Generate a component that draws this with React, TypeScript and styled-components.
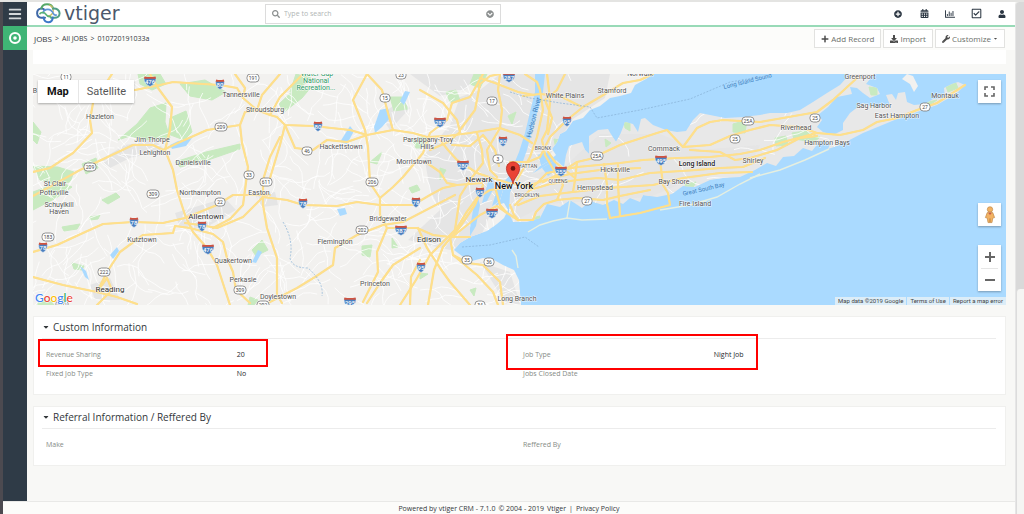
import React from "react";
import styled, { createGlobalStyle, css } from "styled-components";
import {
  FaBars,
  FaCalendarAlt,
  FaCaretDown,
  FaChevronCircleDown,
  FaDownload,
  FaPlus,
  FaPlusCircle,
  FaRegChartBar,
  FaRegCheckSquare,
  FaSearch,
  FaUser,
  FaWrench,
} from "react-icons/fa";

const GlobalStyle = createGlobalStyle`
  *, *::before, *::after { box-sizing: border-box; }
  body { margin: 0; background: #f8f8f6; }
  body, button, input { font-family: "Open Sans", "Noto Sans", sans-serif; }
  h2, dl, dt, dd, p { margin: 0; font-weight: 400; }
  button { padding: 0; border: 0; background: none; color: inherit; }
  a { color: inherit; text-decoration: none; }
`;

/* ---------- page frame ---------- */

const Frame = styled.div`
  display: grid;
  grid-template-columns: 3px minmax(0, 1fr) 9px;
  min-height: 100vh;
  border-top: 2px solid #e4e4e2;
`;

const WindowEdge = styled.div`
  background: #4c4a50;
`;

const ScrollTrack = styled.div`
  display: flex;
  flex-direction: column;
  justify-content: flex-end;
  background: #d9d9d9;
  border-left: 1px solid #e6e6e6;
  border-radius: 4px 0 0 0;
`;

const ScrollThumb = styled.div`
  height: 44%;
  background: #f5f5f3;
  border-left: 1px solid #dcdcdc;
  border-radius: 4px 0 0 0;
`;

const AppShell = styled.div`
  display: flex;
  flex-direction: column;
`;

const Workspace = styled.div`
  display: grid;
  grid-template-columns: 24px minmax(0, 1fr);
  flex: 1;
`;

const SideNav = styled.nav`
  display: flex;
  flex-direction: column;
  background: #2f3b47;
`;

const SideButton = styled.button<{ $active?: boolean }>`
  display: flex;
  align-items: center;
  justify-content: center;
  height: 24px;
  color: ${(p) => (p.$active ? "#ffffff" : "#d3d7da")};
  background: ${(p) => (p.$active ? "#3fb475" : "transparent")};
`;

const MainColumn = styled.div`
  display: flex;
  flex-direction: column;
`;

/* ---------- header ---------- */

const Header = styled.header`
  display: flex;
  align-items: center;
  height: 25px;
  background: #ffffff;
  border-bottom: 2px solid #98dab7;
`;

const Brand = styled.a`
  display: flex;
  align-items: center;
  gap: 3px;
  flex: 0 0 238px;
  height: 23px;
  padding-left: 8px;
`;

const BrandName = styled.span`
  font: 19px/20px "DejaVu Sans", sans-serif;
  color: #4b586b;
  padding-bottom: 2px;
`;

const SearchBox = styled.label`
  display: flex;
  align-items: center;
  gap: 4px;
  flex: 0 1 236px;
  height: 20px;
  padding: 0 6px;
  border: 1px solid #dcdcdc;
  color: #8b8f8f;
`;

const SearchInput = styled.input`
  flex: 1;
  min-width: 0;
  padding: 0;
  border: 0;
  outline: 0;
  background: transparent;
  font-size: 7px;
  line-height: 12px;
  color: #444444;
  &::placeholder {
    color: #b0b5b5;
    opacity: 1;
  }
`;

const HeaderTools = styled.div`
  display: flex;
  align-items: center;
  margin-left: auto;
`;

const ToolButton = styled.button`
  display: flex;
  align-items: center;
  justify-content: center;
  width: 26px;
  height: 22px;
  color: #2b3642;
`;

/* ---------- breadcrumb bar ---------- */

const ModuleBar = styled.div`
  display: flex;
  align-items: center;
  justify-content: space-between;
  height: 23px;
  padding: 0 10px 0 7px;
  background: #fcfcfa;
`;

const Breadcrumb = styled.nav`
  display: flex;
  align-items: center;
  gap: 3px;
  font-size: 7px;
  line-height: 12px;
  color: #33373b;
`;

const ModuleName = styled.a`
  font-size: 8px;
`;

const ButtonRow = styled.div`
  display: flex;
  gap: 2px;
`;

const ActionButton = styled.button`
  display: flex;
  align-items: center;
  gap: 2px;
  height: 19px;
  padding: 0 6px;
  border: 1px solid #e2e2e0;
  background: #ffffff;
  font-size: 8px;
  line-height: 12px;
  color: #6b6f6b;
  svg { color: #4c4c4c; }
`;

/* ---------- content ---------- */

const Content = styled.main`
  display: flex;
  flex-direction: column;
  flex: 1;
  padding: 0 9px 10px 6px;
  background: #f8f8f6;
`;

const SummaryStrip = styled.div`
  height: 14px;
  background: #ffffff;
  margin-bottom: 10px;
`;

const MapPanel = styled.section`
  position: relative;
  height: 231px;
  margin-bottom: 11px;
  overflow: hidden;
  background: #aadaff;
  font-family: Roboto, sans-serif;
`;

const MapDrawing = styled.svg`
  display: block;
  width: 100%;
  height: 100%;
  font-family: Roboto, sans-serif;
`;

const mapControl = css`
  position: absolute;
  background: #ffffff;
  box-shadow: 0 1px 2px rgba(0, 0, 0, 0.3);
  color: #666666;
`;

const MapTypeSwitch = styled.div`
  ${mapControl}
  left: 5px;
  top: 6px;
  display: flex;
  height: 23px;
`;

const MapTypeButton = styled.button<{ $selected?: boolean }>`
  padding: 0 9px;
  font: ${(p) => (p.$selected ? 700 : 400)} 11px/23px Roboto, sans-serif;
  color: ${(p) => (p.$selected ? "#111111" : "#565656")};
  & + & { border-left: 1px solid #e6e6e6; padding: 0 8px; }
`;

const MapSquare = styled.button<{ $top: number }>`
  ${mapControl}
  right: 5px;
  top: ${(p) => p.$top}px;
  display: flex;
  align-items: center;
  justify-content: center;
  width: 23px;
  height: 23px;
`;

const ZoomControl = styled.div`
  ${mapControl}
  right: 5px;
  bottom: 14px;
  display: flex;
  flex-direction: column;
  align-items: center;
  width: 23px;
`;

const ZoomButton = styled.button`
  display: flex;
  align-items: center;
  justify-content: center;
  width: 17px;
  height: 23px;
  & + & { border-top: 1px solid #e6e6e6; }
`;

const MapCredits = styled.div`
  position: absolute;
  right: 0;
  bottom: 0;
  display: flex;
  gap: 1px;
  font-size: 6px;
  line-height: 8px;
  color: #444444;
  > * {
    padding: 0 3px;
    background: #dcedf8;
  }
`;

const Card = styled.section`
  background: #ffffff;
  border: 1px solid #f0f0ee;
  & + & { margin-top: 11px; }
`;

const CardTitle = styled.h2`
  display: flex;
  align-items: center;
  gap: 3px;
  height: 22px;
  margin: 0 9px 0 8px;
  padding-bottom: 2px;
  border-bottom: 1px solid #ececec;
  font-size: 10px;
  line-height: 16px;
  color: #33373a;
`;

const FieldGrid = styled.dl`
  display: grid;
  grid-template-columns: 1fr 1fr;
  padding: 6px 5px 11px 12px;
`;

const Field = styled.div`
  position: relative;
  display: grid;
  grid-template-columns: 2fr 3fr;
  font-size: 7px;
  line-height: 19px;
  dt { color: #868b86; }
  dd { color: #26292c; }
`;

const Highlight = styled.span<{ $wide?: boolean }>`
  position: absolute;
  pointer-events: none;
  border: 2px solid #ff0000;
  ${(p) =>
    p.$wide
      ? css`inset: -11px 242px -6px -17px;`
      : css`inset: -6px 255px -3px -8px;`}
`;

const Footer = styled.footer`
  height: 13px;
  border-top: 1px solid #e9e9e7;
  background: #fcfcfa;
  display: flex;
  justify-content: center;
  gap: 3px;
  font-size: 7px;
  line-height: 14px;
  color: #33373a;
`;

const MAINLAND =
  "33,74 653,74 646,79 635,85 631,93 620,96 610,98 600,106 590,110 583,118 573,121 566,131 560,134 557,142 552,149 556,155 549,161 540,166 530,176 520,184 511,187 503,190 500,200 494,206 504,203 508,210 504,218 497,224 487,231 470,237 460,243 454,250 462,256 472,261 483,258 494,260 503,265 514,270 519,280 521,305 33,305";
const LONG_ISLAND =
  "510,193 516,180 530,175 545,166 556,160 564,167 566,155 569,146 582,142 585,150 589,154 589,136 598,130 608,129 612,136 616,142 620,135 625,122 633,124 638,132 641,119 645,118 653,125 666,130 677,132 686,131 693,120 700,113 710,115 725,118 743,117 760,115 770,113 787,113 800,110 813,102 827,93 840,85 850,74 874,74 866,84 877,88 880,94 870,98 863,93 857,88 850,87 852,94 837,97 828,107 818,115 822,120 817,127 823,132 833,135 843,130 843,123 850,113 863,103 876,108 890,105 886,95 892,94 896,100 898,93 905,92 907,102 914,105 925,104 933,99 945,98 944,88 952,84 958,82 965,85 957,93 937,105 917,112 897,119 863,133 840,145 828,149 831,142 820,141 812,151 803,148 794,156 783,157 776,166 767,163 755,170 740,177 723,178 710,180 695,187 683,186 672,194 657,197 643,195 640,202 630,198 623,204 614,200 603,205 590,201 582,208 570,200 560,207 547,204 540,218 527,222 513,222 509,213";

const URBAN = [
  "500,74 610,74 605,98 573,119 552,152 530,176 494,206 480,238 450,250 428,245 408,240 440,210 430,190 424,155 450,125 460,97 480,90",
  "410,74 480,74 465,90 440,96",
  "510,193 530,175 564,167 600,134 660,134 700,150 760,145 750,165 690,180 650,197 547,204 513,222",
  "100,160 125,145 155,140 165,150 130,158 110,168",
  "175,213 225,198 236,210 205,228 180,228",
  "90,285 110,278 120,300 95,300",
  "255,195 275,192 278,205 262,207",
  "480,262 510,272 520,304 506,304",
  "380,115 402,100 410,108 390,130",
];

const WATER = [
  "535,74 545,74 543,92 537,113 532,130 527,150 519,172 509,188 501,200 492,206 497,190 509,176 519,152 525,133 530,112 535,92",
  "538,155 546,152 555,158 557,169 548,176 542,168",
  "470,228 474,204 478,198 480,205 476,226 470,236",
  "488,182 493,176 494,188 487,201 482,203",
  "170,145 178,141 192,138 186,146 172,149",
  "374,127 380,110 388,108 390,118 382,127 375,133",
  "110,255 117,247 119,251 113,259",
  "337,209 345,208 347,214 340,216",
  "80,266 86,271 89,280 85,277",
  "252,262 258,250 262,252 256,263",
  "340,142 350,126 354,131 347,144",
  "400,101 405,91 410,92 404,105",
];

const PARKS = [
  "138,74 160,74 166,84 152,90 140,84",
  "180,84 205,80 226,92 212,100 190,96",
  "118,140 137,124 150,108 166,103 165,122 170,138 146,140 130,136",
  "170,118 186,111 192,132 184,140 168,134",
  "33,122 41,132 37,144 33,140",
  "33,166 58,167 74,172 70,182 54,184 40,180",
  "82,164 96,158 98,168 86,174",
  "33,192 60,182 72,187 56,198 33,210",
  "102,200 116,193 120,197 108,204",
  "62,227 80,224 77,229 64,231",
  "90,217 100,215 98,219 90,220",
  "175,162 206,152 240,144 240,149 208,160 180,167",
  "279,104 296,88 312,86 302,98 284,112",
  "296,74 311,78 300,88 290,92",
  "390,97 402,97 408,109 394,111",
  "412,139 430,136 427,148 416,148",
  "470,84 474,74 487,74 480,88",
  "446,92 456,90 460,100 450,102",
  "252,250 262,240 268,250 256,256",
  "362,246 372,245 370,257 362,255",
  "409,188 417,185 420,190 412,193",
  "392,238 398,247 392,248",
  "440,168 446,170 440,180",
  "370,162 382,152 377,164",
  "733,124 747,120 745,133 733,132",
  "775,138 786,136 788,145 776,146",
  "792,133 805,131 820,137 814,142 794,139",
  "869,87 877,88 877,95 871,95",
  "685,184 696,182 692,189 686,189",
  "945,84 955,81 958,88 948,92",
  "924,103 937,100 928,106",
  "624,121 630,123 630,131 625,128",
  "554,139 560,140 556,149",
  "536,217 540,216 538,223 534,222",
  "605,139 611,143 606,147",
  "508,116 516,112 512,124",
  "38,302 50,300 54,305 38,305",
  "72,263 84,266 82,270 74,269",
  "420,273 428,274 420,279",
  "470,290 476,288 474,296",
  "250,297 258,300 254,305 248,305",
];

const HIGHWAYS = [
  "135,90 160,85 173,82 203,84 220,85 237,88 243,98 257,110 270,115 277,117 285,125 313,126 350,130 367,135 393,130 413,133 427,137 447,136 470,133 500,128 520,135 532,143",
  "112,74 93,103 90,120 92,133 73,153 50,168 33,172",
  "150,74 158,88 172,107 170,130 165,150 173,170 177,190 185,215 193,232 207,248 217,265 230,305",
  "33,196 53,185 80,170 97,162 133,145 153,145 163,150 180,142 207,130 240,125 245,112 257,110",
  "240,125 242,143 248,167 245,190 243,205 230,219 213,228",
  "280,137 270,157 263,180 263,205 267,228 277,258 277,295 282,303",
  "235,74 245,88 243,98",
  "280,74 262,95 257,110",
  "33,252 57,245 83,233 103,224 133,222 163,223 185,218 217,205 233,195 270,195",
  "185,223 200,225 217,228 243,217 263,197 287,200 303,205 337,206 357,202 380,205 413,205 430,195 443,188 457,185 482,183",
  "190,228 175,226 173,233 143,235 120,252 107,272 97,292",
  "33,277 63,285 97,292 117,297 137,304",
  "97,292 107,278 112,290 97,305",
  "190,228 213,234 223,242 227,258 233,272 236,290 250,303",
  "270,302 297,288 315,277 333,265 335,248 357,235 383,225 403,222 430,208 455,195",
  "483,74 470,97 452,103 447,120 430,133 423,153 403,177 393,187 380,198 380,215 387,228 417,228 433,235 450,237 470,237",
  "367,74 353,100 365,130 368,147 370,183 380,198",
  "387,228 377,252 378,272 363,302",
  "367,74 382,90 388,113 393,130",
  "285,125 295,148 313,150 327,140 347,142 367,135",
  "303,74 280,97 270,115",
  "270,178 280,145 285,125",
  "511,187 490,190 477,198 466,213 457,228 430,255 416,280 400,305",
  "483,185 475,205 459,228 443,247 434,270 428,305",
  "420,248 393,265 380,283 367,303",
  "410,305 411,277 420,260",
  "450,237 453,255 477,275 493,292 498,305",
  "418,228 427,248 440,268 450,282 470,305",
  "453,255 468,263 483,265 500,282 503,305",
  "420,90 443,103 457,120 460,132 448,142 430,150",
  "460,130 475,110 480,84 490,76 500,74",
  "500,74 498,90 502,110 500,128 487,150 490,170 497,177",
  "477,133 482,150 483,163 470,180 460,196 455,230",
  "440,140 448,150 457,160 477,173 492,178 512,184",
  "427,163 440,172 447,183 457,185",
  "452,145 470,146 483,135 495,150 499,166",
  "525,74 537,82 540,90 543,110 537,137 530,157 517,180",
  "547,74 549,90 550,103 547,130 542,140 545,155",
  "565,74 557,90 545,100 552,118 548,134",
  "523,96 540,94 560,96 580,106",
  "480,78 495,83 518,92 534,95",
  "653,74 640,80 623,83 600,97 583,107 567,120 550,137 540,157 528,162 510,162",
  "515,205 525,195 547,173 577,167 620,163 643,160 677,158 710,157 740,154 760,150 783,142 817,133 840,135 863,130 877,122 897,118 917,110 937,103 965,85",
  "543,182 557,175 577,162 590,159 620,145 657,133 667,130 683,147 697,128 710,122 723,120 760,122 783,118 817,112 833,100 857,78",
  "683,147 710,145 730,136 750,130 770,125 800,127 817,133",
  "690,150 720,152 735,160 750,158 777,150 800,138 817,136",
  "530,190 550,184 577,180 598,178 620,180 650,173 697,170 720,168 743,167 765,158",
  "518,205 540,196 573,192 607,188 653,185 683,178 720,173 752,172",
  "510,205 514,215 518,220 533,220 536,212 544,204 557,200 577,198 603,200 620,196 650,190",
  "604,164 607,185 607,204 610,218 640,213 670,205 668,193 663,185 660,160",
  "618,165 618,184 620,216",
  "545,155 555,172 563,185 557,200",
  "577,162 575,180 573,192",
  "512,183 528,186 545,180 570,174 600,170 640,168",
  "548,152 555,162 575,178",
  "452,237 480,215 497,206 507,213 518,220",
  "495,187 500,205 507,213",
];

const BEACHES = [
  "528,232 540,225 553,221 567,218 582,220 607,219",
  "567,218 570,200",
  "750,178 780,170 805,160 829,149",
  "660,210 690,205 717,197 740,184 760,174",
  "512,250 516,256 518,268",
];

type Place = { t: string; x: number; y: number; s?: number; c?: string; w?: number };

const PLACES: Place[] = [
  { t: "B", x: 35, y: 93 },
  { t: "Hazleton", x: 100, y: 119 },
  { t: "Jim Thorpe", x: 152, y: 142 },
  { t: "Lehighton", x: 155, y: 155 },
  { t: "Danielsville", x: 193, y: 165 },
  { t: "Tannersville", x: 241, y: 97 },
  { t: "Stroudsburg", x: 265, y: 112 },
  { t: "St Clair", x: 55, y: 186 },
  { t: "Pottsville", x: 54, y: 195 },
  { t: "Schuylkill", x: 59, y: 207 },
  { t: "Haven", x: 59, y: 214 },
  { t: "Northampton", x: 200, y: 195 },
  { t: "Easton", x: 259, y: 195 },
  { t: "Allentown", x: 206, y: 219, s: 8, c: "#333333" },
  { t: "Kutztown", x: 142, y: 242 },
  { t: "Quakertown", x: 233, y: 263 },
  { t: "Perkasie", x: 243, y: 282 },
  { t: "Reading", x: 110, y: 292, s: 8, c: "#333333" },
  { t: "Doylestown", x: 278, y: 299 },
  { t: "Hackettstown", x: 341, y: 149 },
  { t: "Parsippany-Troy", x: 428, y: 142 },
  { t: "Hills", x: 427, y: 149 },
  { t: "Morristown", x: 414, y: 164 },
  { t: "Newark", x: 479, y: 182, s: 8, c: "#333333" },
  { t: "Bridgewater", x: 388, y: 221 },
  { t: "Flemington", x: 335, y: 244 },
  { t: "Edison", x: 429, y: 242, s: 8, c: "#333333" },
  { t: "Princeton", x: 375, y: 286 },
  { t: "Long Branch", x: 517, y: 301 },
  { t: "White Plains", x: 565, y: 98 },
  { t: "Stamford", x: 612, y: 93 },
  { t: "Norwalk", x: 640, y: 76 },
  { t: "BRONX", x: 543, y: 150, s: 5 },
  { t: "MANHATTAN", x: 522, y: 168, s: 5 },
  { t: "QUEENS", x: 558, y: 183, s: 5 },
  { t: "BROOKLYN", x: 527, y: 197, s: 5 },
  { t: "Hicksville", x: 615, y: 172 },
  { t: "Hempstead", x: 595, y: 190 },
  { t: "Commack", x: 664, y: 151 },
  { t: "Long Island", x: 697, y: 166, c: "#222222", w: 500 },
  { t: "Bay Shore", x: 674, y: 184 },
  { t: "Shirley", x: 753, y: 163 },
  { t: "Fire Island", x: 695, y: 206 },
  { t: "Riverhead", x: 796, y: 130 },
  { t: "Hampton Bays", x: 827, y: 145 },
  { t: "Greenport", x: 860, y: 79 },
  { t: "Sag Harbor", x: 874, y: 108 },
  { t: "East Hampton", x: 897, y: 118 },
  { t: "Montauk", x: 945, y: 98 },
  { t: "Water Gap", x: 317, y: 76, c: "#2e9a66" },
  { t: "National", x: 316, y: 83, c: "#2e9a66" },
  { t: "Recreation...", x: 316, y: 90, c: "#2e9a66" },
];

type Sign = [label: string, x: number, y: number];

const INTERSTATES: Sign[] = [
  ["476", 150, 81], ["80", 220, 84], ["80", 318, 126], ["287", 509, 77],
  ["287", 440, 122], ["80", 503, 141], ["280", 463, 165], ["95", 567, 121],
  ["495", 661, 160], ["255", 561, 171], ["78", 134, 222], ["78", 202, 226],
  ["78", 43, 247], ["476", 208, 249], ["78", 303, 203], ["78", 416, 202],
  ["287", 401, 230], ["95", 421, 267], ["278", 492, 213], ["95", 480, 192],
  ["295", 350, 302],
];

const ROUTES: Sign[] = [
  ["11", 66, 77], ["191", 253, 78], ["209", 221, 127], ["209", 90, 167],
  ["33", 249, 175], ["611", 266, 182], ["23", 401, 75], ["15", 385, 98],
  ["17", 492, 101], ["46", 307, 151], ["206", 372, 182], ["3", 498, 159],
  ["25A", 597, 156], ["25A", 748, 121], ["25", 735, 139], ["25", 815, 118],
  ["27", 925, 107], ["27", 587, 201], ["309", 153, 194], ["22", 220, 202],
  ["183", 48, 237], ["222", 104, 272], ["309", 240, 290], ["202", 362, 230],
  ["35", 467, 260], ["36", 489, 262], ["(87)", 62, 304], ["202", 263, 305],
  ["34", 480, 305],
];

/* Repeatable web of local streets behind the highways. */
const streets: string[] = (() => {
  let seed = 41;
  const next = () => {
    seed = (seed * 16807) % 2147483647;
    return seed / 2147483647;
  };
  const lines: string[] = [];
  for (let i = 0; i < 430; i += 1) {
    let x = 33 + next() * (i % 3 === 0 ? 800 : 500);
    let y = 74 + next() * 231;
    let heading = next() * Math.PI * 2;
    let d = `M${x.toFixed(1)} ${y.toFixed(1)}`;
    for (let k = 0; k < 6; k += 1) {
      heading += (next() - 0.5) * 1.1;
      x += Math.cos(heading) * 7;
      y += Math.sin(heading) * 7;
      d += `L${x.toFixed(1)} ${y.toFixed(1)}`;
    }
    lines.push(d);
  }
  return lines;
})();

function RegionMap() {
  return (
    <MapDrawing viewBox="33 74 973 231" preserveAspectRatio="xMidYMid slice" role="img" aria-label="Map of New York area">
      <defs>
        <clipPath id="land">
          <polygon points={MAINLAND} />
          <polygon points={LONG_ISLAND} />
        </clipPath>
      </defs>
      <rect x="-500" y="-200" width="2200" height="900" fill="#aadaff" />
      <polygon points={MAINLAND} fill="#f2f1ef" />
      <polygon points={LONG_ISLAND} fill="#e8e8e8" />
      <polygon points="907,74 913,76 918,86 914,92 910,84 902,79" fill="#f2f1ef" />
      <g clipPath="url(#land)">
        {URBAN.map((p) => <polygon key={p} points={p} fill="#e5e5e5" />)}
        {PARKS.map((p) => <polygon key={p} points={p} fill="#c8eac0" stroke="#c8eac0" strokeWidth="1" strokeLinejoin="round" />)}
        {streets.map((d) => <path key={d} d={d} fill="none" stroke="#ffffff" strokeWidth="0.8" />)}
        {WATER.map((p) => <polygon key={p} points={p} fill="#aadaff" />)}
      </g>
      {BEACHES.map((p) => <polyline key={p} points={p} fill="none" stroke="#e6efe0" strokeWidth="1.4" />)}
      <g fill="none" strokeLinejoin="round" strokeLinecap="round">
        {HIGHWAYS.map((p) => <polyline key={p} points={p} stroke="#f9dc94" strokeWidth="2.2" />)}
        {HIGHWAYS.map((p) => <polyline key={p} points={p} stroke="#ffe08a" strokeWidth="1.4" />)}
      </g>
      <g fill="none" stroke="#86b0d6" strokeWidth="0.7" strokeDasharray="2 1.4">
        <polyline points="510,92 530,98 560,103 590,107 597,118 640,110 690,99 730,82 760,77" />
        <polyline points="462,247 490,245 525,237 539,247" />
        <path d="M283 222Q294 240 290 258Q292 268 308 268Q324 282 322 296" />
      </g>
      {ROUTES.map(([label, x, y]) => {
        const w = label.length > 2 ? 12 : 10;
        return (
          <g key={`${label}-${x}`}>
            <rect x={x - w / 2} y={y - 4} width={w} height="8" rx="3.4" fill="#ffffff" stroke="#777777" strokeWidth="0.8" />
            <text x={x} y={y + 2} fontSize="5" textAnchor="middle" fill="#444444">{label}</text>
          </g>
        );
      })}
      {INTERSTATES.map(([label, x, y]) => {
        const h = label.length > 2 ? 6.5 : 4.8;
        return (
          <g key={`${label}-${x}-${y}`}>
            <path
              d={`M${x - h + 1} ${y - 4}Q${x} ${y - 3} ${x + h - 1} ${y - 4}Q${x + h + 1} ${y + 2} ${x} ${y + 5.5}Q${x - h - 1} ${y + 2} ${x - h + 1} ${y - 4}Z`}
              fill="#4a7fc0"
              stroke="#e8eef6"
              strokeWidth="0.5"
            />
            <path d={`M${x - h + 1} ${y - 4.4}Q${x} ${y - 3.4} ${x + h - 1} ${y - 4.4}L${x + h - 0.4} ${y - 2.2}H${x - h + 0.4}Z`} fill="#d0533f" />
            <text x={x} y={y + 2.8} fontSize="6" fontWeight="500" textAnchor="middle" fill="#ffffff">{label}</text>
          </g>
        );
      })}
      <g textAnchor="middle" stroke="#ffffff" strokeWidth="1.2" strokeOpacity="0.75" strokeLinejoin="round" style={{ paintOrder: "stroke" }}>
        {PLACES.map((p) => (
          <text key={p.t} x={p.x} y={p.y} fontSize={p.s ?? 7} fontWeight={p.w ?? 400} fill={p.c ?? "#555555"}>{p.t}</text>
        ))}
        <text x="514" y="189" fontSize="9" fontWeight="500" fill="#111111">New York</text>
      </g>
      <g textAnchor="middle" fill="#3d7ebd">
        <text fontSize="7" transform="translate(536 118) rotate(-76)">Hudson River</text>
        <text fontSize="6" transform="translate(748 83) rotate(-14)">Long Island Sound</text>
        <text fontSize="6" transform="translate(704 191) rotate(-13)">Great South Bay</text>
      </g>
      <path d="M513 184C512.4 178 506.4 175 506.4 168.4A6.6 6.6 0 0 1 519.6 168.4C519.6 175 513.6 178 513 184Z" fill="#ea4335" stroke="#b3241b" strokeWidth="0.7" />
      <circle cx="513" cy="168.4" r="2.3" fill="#6e1510" />
      <text x="35" y="302" fontSize="12" fontWeight="500" stroke="#ffffff" strokeWidth="1.2" fontFamily="Lato, sans-serif" style={{ paintOrder: "stroke" }}>
        <tspan fill="#4285f4">G</tspan>
        <tspan fill="#ea4335">o</tspan>
        <tspan fill="#fbbc05">o</tspan>
        <tspan fill="#4285f4">g</tspan>
        <tspan fill="#34a853">l</tspan>
        <tspan fill="#ea4335">e</tspan>
      </text>
    </MapDrawing>
  );
}

function CloudLogo() {
  return (
    <svg width="26" height="21" viewBox="0 0 26 21" fill="none" strokeLinecap="round" aria-hidden="true">
      <path d="M10 14.8H6.2A4.7 4.7 0 0 1 5.6 5.6C7 5.4 8.6 5.8 9.8 7" stroke="#3f68a8" strokeWidth="2" />
      <path d="M6.4 5.4C7 2.6 9.4 1.2 12 1.2C15 1.2 17.6 3 18.2 5.8" stroke="#55a868" strokeWidth="2" />
      <path d="M14.6 2.2C17 3 18.4 5 18.2 8.2C17.8 11.4 15 13 13 13" stroke="#c9bd63" strokeWidth="1.4" />
      <path d="M18 5.6C21.6 5.2 24.6 7.2 24.6 10.2C24.6 13.2 22.2 14.8 19.6 14.8H16" stroke="#4f9f86" strokeWidth="2" />
      <path d="M8 10C8.4 7.6 10.6 6.4 12.8 6.4C15.6 6.4 17.4 8.4 18.4 10.6C19 12 20 12.4 21.4 12" stroke="#5d94d6" strokeWidth="1.6" />
      <path d="M5 10.6C6.6 9 9.4 9.2 10.8 11.2C12 13 13.6 14 15.6 13.4" stroke="#5ab277" strokeWidth="1.6" />
      <path d="M8.6 14.6C9 17.4 10.8 19.2 13.2 19.2C16 19.2 17.6 17.4 17.8 14.4" stroke="#3c78c8" strokeWidth="2" />
    </svg>
  );
}

function Pegman() {
  return (
    <svg width="12" height="18" viewBox="0 0 12 18" aria-hidden="true">
      <circle cx="6" cy="3.4" r="2.7" fill="#f2b263" stroke="#b9803c" strokeWidth="0.6" />
      <path d="M3.2 6.6H8.8L10.6 11.6L8.8 12L8 16.6H4L3.2 12L1.4 11.6Z" fill="#f2b263" stroke="#b9803c" strokeWidth="0.6" />
      <path d="M4.2 6.8L6 9L7.8 6.8" fill="#c7584a" />
      <path d="M6 12.4V16.4" stroke="#a36d31" strokeWidth="0.7" />
    </svg>
  );
}

type Item = { label: string; value?: string; highlight?: "narrow" | "wide" };

function Section({ title, items }: { title: string; items: Item[] }) {
  return (
    <Card>
      <CardTitle>
        <FaCaretDown size={8} aria-hidden="true" />
        {title}
      </CardTitle>
      <FieldGrid>
        {items.map((item) => (
          <Field key={item.label}>
            <dt>{item.label}</dt>
            <dd>
              {item.value}
              {item.highlight && <Highlight $wide={item.highlight === "wide"} />}
            </dd>
          </Field>
        ))}
      </FieldGrid>
    </Card>
  );
}

export default function App() {
  return (
    <>
      <GlobalStyle />
      <Frame>
        <WindowEdge />
        <AppShell>
          <Workspace>
            <SideNav aria-label="Modules">
              <SideButton aria-label="Menu"><FaBars size={14} /></SideButton>
              <SideButton $active aria-label="Jobs">
                <svg width="14" height="14" viewBox="0 0 14 14" fill="none" aria-hidden="true">
                  <circle cx="7" cy="7" r="5" stroke="currentColor" strokeWidth="2" />
                  <circle cx="7" cy="7" r="1.8" fill="currentColor" />
                </svg>
              </SideButton>
            </SideNav>
            <MainColumn>
              <Header>
                <Brand href="#home">
                  <CloudLogo />
                  <BrandName>vtiger</BrandName>
                </Brand>
                <SearchBox>
                  <FaSearch size={8} aria-hidden="true" />
                  <SearchInput type="text" placeholder="Type to search" aria-label="Search" />
                  <FaChevronCircleDown size={8} aria-hidden="true" />
                </SearchBox>
                <HeaderTools>
                  <ToolButton aria-label="Quick create"><FaPlusCircle size={8} /></ToolButton>
                  <ToolButton aria-label="Calendar"><FaCalendarAlt size={9} /></ToolButton>
                  <ToolButton aria-label="Reports"><FaRegChartBar size={10} /></ToolButton>
                  <ToolButton aria-label="Tasks"><FaRegCheckSquare size={11} /></ToolButton>
                  <ToolButton aria-label="Account"><FaUser size={8} /></ToolButton>
                </HeaderTools>
              </Header>
              <ModuleBar>
                <Breadcrumb aria-label="Breadcrumb">
                  <ModuleName href="#jobs">JOBS</ModuleName>
                  <span>&gt;</span>
                  <a href="#all">All JOBS</a>
                  <span>&gt;</span>
                  <a href="#record">010720191033a</a>
                </Breadcrumb>
                <ButtonRow>
                  <ActionButton><FaPlus size={8} />Add Record</ActionButton>
                  <ActionButton><FaDownload size={8} />Import</ActionButton>
                  <ActionButton><FaWrench size={8} />Customize<FaCaretDown size={5} /></ActionButton>
                </ButtonRow>
              </ModuleBar>
              <Content>
                <SummaryStrip />
                <MapPanel aria-label="Job location">
                  <RegionMap />
                  <MapTypeSwitch>
                    <MapTypeButton $selected>Map</MapTypeButton>
                    <MapTypeButton>Satellite</MapTypeButton>
                  </MapTypeSwitch>
                  <MapSquare $top={6} aria-label="Full screen">
                    <svg width="11" height="11" viewBox="0 0 11 11" fill="none" stroke="currentColor" strokeWidth="1.6" aria-hidden="true">
                      <path d="M1 4V1H4M7 1H10V4M10 7V10H7M4 10H1V7" />
                    </svg>
                  </MapSquare>
                  <MapSquare $top={129} aria-label="Street view"><Pegman /></MapSquare>
                  <ZoomControl>
                    <ZoomButton aria-label="Zoom in">
                      <svg width="10" height="10" viewBox="0 0 10 10" stroke="currentColor" strokeWidth="2" aria-hidden="true"><path d="M0 5H10M5 0V10" /></svg>
                    </ZoomButton>
                    <ZoomButton aria-label="Zoom out">
                      <svg width="10" height="10" viewBox="0 0 10 10" stroke="currentColor" strokeWidth="2" aria-hidden="true"><path d="M0 5H10" /></svg>
                    </ZoomButton>
                  </ZoomControl>
                  <MapCredits>
                    <span>Map data ©2019 Google</span>
                    <a href="#terms">Terms of Use</a>
                    <a href="#report">Report a map error</a>
                  </MapCredits>
                </MapPanel>
                <Section
                  title="Custom Information"
                  items={[
                    { label: "Revenue Sharing", value: "20", highlight: "narrow" },
                    { label: "Job Type", value: "Night Job", highlight: "wide" },
                    { label: "Fixed Job Type", value: "No" },
                    { label: "Jobs Closed Date" },
                  ]}
                />
                <Section
                  title="Referral Information / Reffered By"
                  items={[{ label: "Make" }, { label: "Reffered By" }]}
                />
              </Content>
            </MainColumn>
          </Workspace>
          <Footer>
            <span>Powered by vtiger CRM - 7.1.0</span>
            <span>© 2004 - 2019</span>
            <a href="#vtiger">Vtiger</a>
            <span>|</span>
            <a href="#privacy">Privacy Policy</a>
          </Footer>
        </AppShell>
        <ScrollTrack><ScrollThumb /></ScrollTrack>
      </Frame>
    </>
  );
}
